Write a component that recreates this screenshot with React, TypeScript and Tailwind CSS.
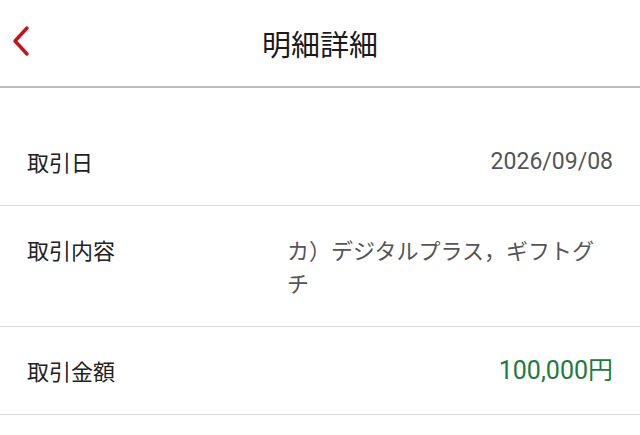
import React from 'react';

interface Row {
  label: string;
  value: string;
  tone?: 'amount';
}

const rows: Row[] = [
  { label: '取引日', value: '2026/09/08' },
  { label: '取引内容', value: 'カ）デジタルプラス，ギフトグチ' },
  { label: '取引金額', value: '100,000円', tone: 'amount' },
];

const BackIcon: React.FC = () => (
  <svg width="22" height="32" viewBox="0 0 22 32" fill="none">
    <path d="M17 3 L5 16 L17 29" stroke="#c4121a" strokeWidth="3.4" strokeLinecap="round" strokeLinejoin="round" />
  </svg>
);

const App: React.FC = () => {
  return (
    <div className="w-screen h-screen bg-white overflow-hidden font-['Noto_Sans_CJK_JP','Noto_Sans',sans-serif]">
      <header className="relative h-[88px] flex items-center justify-center border-b-2 border-[#bdbdbd]">
        <button className="absolute left-[10px] top-[25px]">
          <BackIcon />
        </button>
        <h1 className="text-[29px] text-[#1a1a1a] leading-none">明細詳細</h1>
      </header>

      <div className="pt-[30px]">
        {rows.map((row) => (
          <div key={row.label} className="flex items-center px-[27px] py-[27px] border-b border-[#dcdcdc]">
            <div className="w-[260px] shrink-0 self-start text-[22px] leading-[33px] text-[#222]">{row.label}</div>
            {row.label === '取引内容' ? (
              <div className="flex-1 text-[22px] leading-[33px] text-[#555] text-left">{row.value}</div>
            ) : (
              <div
                className={
                  row.tone === 'amount'
                    ? "flex-1 text-right font-['Roboto','Noto_Sans_CJK_JP',sans-serif] text-[25px] leading-[33px] text-[#217a3f]"
                    : "flex-1 text-right font-['Roboto','Noto_Sans_CJK_JP',sans-serif] text-[23px] leading-[33px] text-[#555]"
                }
              >
                {row.value}
              </div>
            )}
          </div>
        ))}
      </div>
    </div>
  );
};

export default App;
